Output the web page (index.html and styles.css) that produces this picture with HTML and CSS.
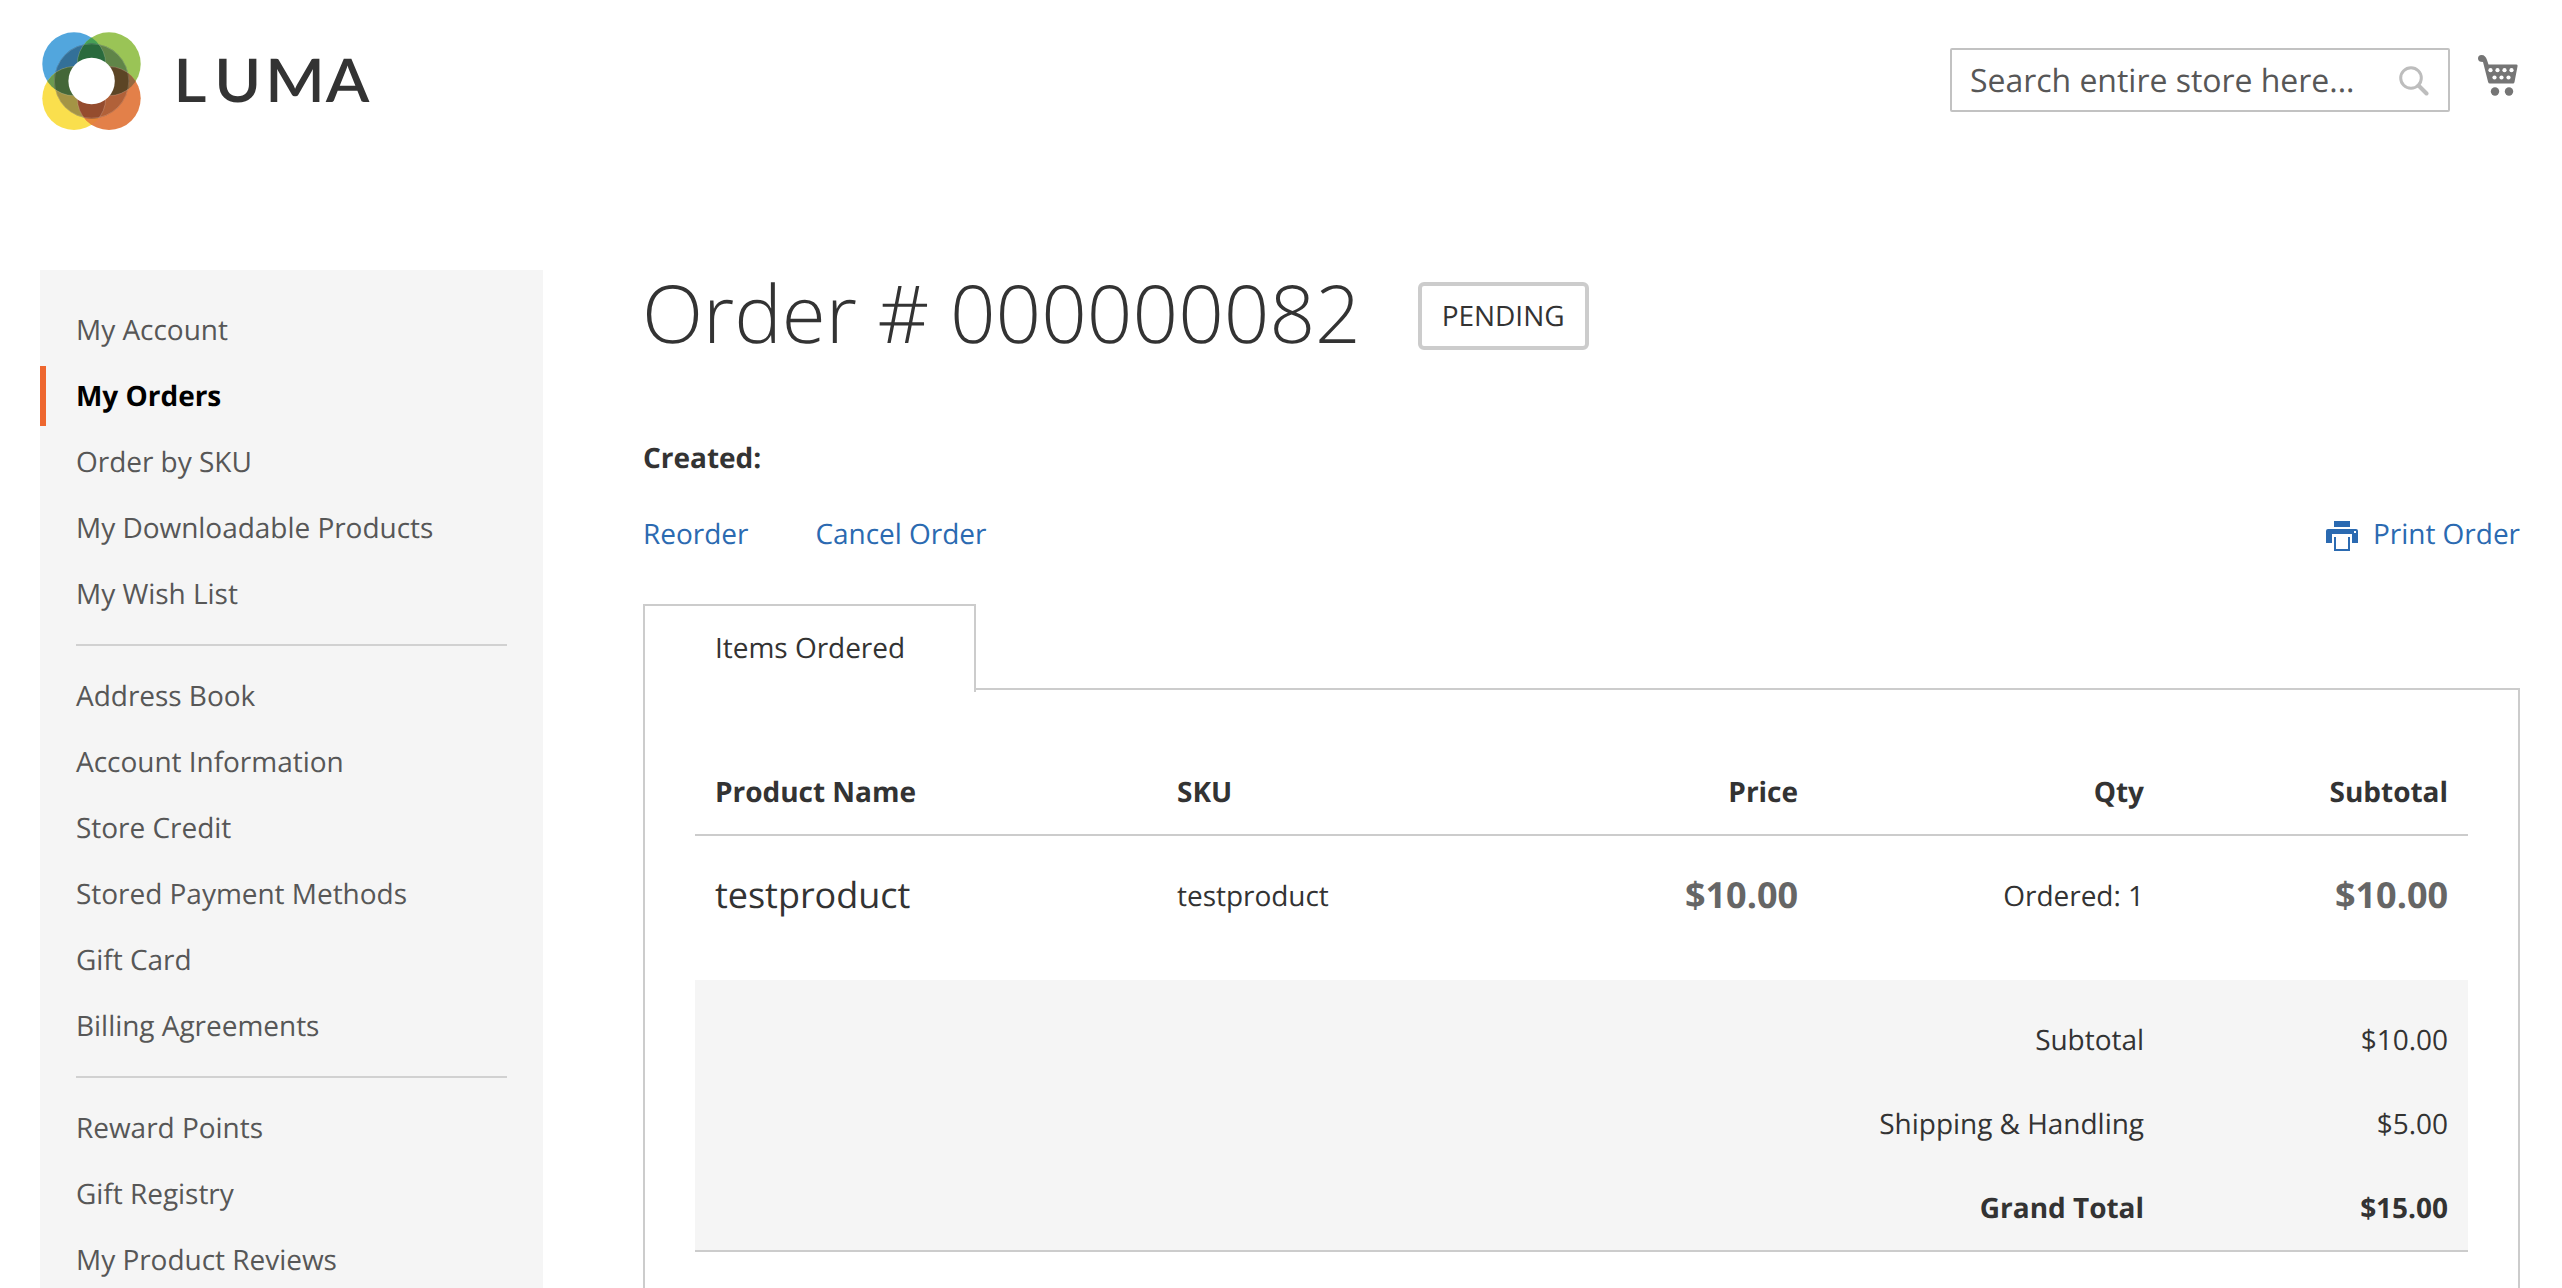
FILE: index.html
```html
<!DOCTYPE html>
<html lang="en">
<head>
<meta charset="utf-8">
<title>Order # 000000082</title>
<link rel="stylesheet" href="styles.css">
</head>
<body>
<header class="header">
  <svg class="logo" width="340" height="100" viewBox="0 0 340 100" role="img" aria-label="LUMA">
    <defs>
      <clipPath id="blue"><circle cx="32" cy="32" r="31.7"/></clipPath>
      <clipPath id="orange"><circle cx="67" cy="66.3" r="31.7"/></clipPath>
      <clipPath id="ring"><circle cx="49.6" cy="49" r="37.5"/></clipPath>
    </defs>
    <circle cx="32" cy="32" r="31.7" fill="#52a6dd"/>
    <circle cx="67" cy="32" r="31.7" fill="#9ac456"/>
    <circle cx="32" cy="66.3" r="31.7" fill="#fadf4d"/>
    <circle cx="67" cy="66.3" r="31.7" fill="#e38049"/>
    <g clip-path="url(#blue)"><circle cx="67" cy="32" r="31.7" fill="#479f56"/><circle cx="32" cy="66.3" r="31.7" fill="#6b9a50"/></g>
    <g clip-path="url(#orange)"><circle cx="67" cy="32" r="31.7" fill="#94683f"/><circle cx="32" cy="66.3" r="31.7" fill="#e5853a"/></g>
    <g clip-path="url(#ring)">
      <circle cx="32" cy="32" r="31.7" fill="#337098"/>
      <circle cx="67" cy="32" r="31.7" fill="#608548"/>
      <circle cx="32" cy="66.3" r="31.7" fill="#a49445"/>
      <circle cx="67" cy="66.3" r="31.7" fill="#b16139"/>
      <g clip-path="url(#blue)"><circle cx="67" cy="32" r="31.7" fill="#2a6a3d"/><circle cx="32" cy="66.3" r="31.7" fill="#446738"/></g>
      <g clip-path="url(#orange)"><circle cx="67" cy="32" r="31.7" fill="#5c4525"/><circle cx="32" cy="66.3" r="31.7" fill="#954c2e"/></g>
    </g>
    <g fill="none" stroke="#fff" stroke-opacity=".3" stroke-width=".6" clip-path="url(#ring)"><circle cx="32" cy="32" r="31.7"/><circle cx="67" cy="32" r="31.7"/><circle cx="32" cy="66.3" r="31.7"/><circle cx="67" cy="66.3" r="31.7"/><circle cx="49.6" cy="49" r="37.2"/></g>
    <circle cx="49.6" cy="49" r="23.2" fill="#fff"/>
    <text class="logo-text" transform="scale(1.06 1)" x="124 162.600 210.500 267.600" y="69.5">LUMA</text>
  </svg>
  <div class="tools">
    <div class="search"><span>Search entire store here...</span>
      <svg width="30" height="30" viewBox="0 0 30 30" fill="none" stroke="#bdbdbd"><circle cx="12" cy="12" r="10.3" stroke-width="3"/><path d="M19.5 19.5L27.5 27.500" stroke-width="4" stroke-linecap="round"/></svg>
    </div>
    <svg class="cart" width="40" height="42" viewBox="0 0 40 42"><path fill="#757575" d="M3.5 0C6.5 0 8 2 9 5L10.500 9.500H38.500Q40 9.500 39.500 11.500L36.500 27Q36.200 28.500 35 28.500H12Q10.500 28.500 10.100 27L5 7Q0 7 0 3.500Q0 0 3.500 0Z"/><g fill="#fff"><circle cx="12.500" cy="15.200" r="2.100"/><circle cx="19.500" cy="15.200" r="2.100"/><circle cx="26.500" cy="15.200" r="2.100"/><circle cx="33.500" cy="15.200" r="2.100"/><circle cx="16.500" cy="22.500" r="2.100"/><circle cx="23.500" cy="22.500" r="2.100"/><circle cx="30.500" cy="22.500" r="2.100"/></g><g fill="#757575"><circle cx="17" cy="36.500" r="4.200"/><circle cx="31" cy="36.500" r="4.200"/></g></svg>
  </div>
</header>
<div class="columns">
  <nav class="sidebar">
    <a>My Account</a>
    <a class="current">My Orders</a>
    <a>Order by SKU</a>
    <a>My Downloadable Products</a>
    <a>My Wish List</a>
    <hr>
    <a>Address Book</a>
    <a>Account Information</a>
    <a>Store Credit</a>
    <a>Stored Payment Methods</a>
    <a>Gift Card</a>
    <a>Billing Agreements</a>
    <hr>
    <a>Reward Points</a>
    <a>Gift Registry</a>
    <a>My Product Reviews</a>
  </nav>
  <main class="main">
    <div class="title-row"><h1>Order # 000000082</h1><span class="status">PENDING</span></div>
    <div class="created">Created:</div>
    <div class="actions">
      <a>Reorder</a><a>Cancel Order</a>
      <a class="print"><svg width="32" height="30" viewBox="0 0 32 30" fill="#2b6ab1"><path d="M8 0H24V6H8Z"/><path fill-rule="evenodd" d="M2 8H30Q32 8 32 10V22H26V13H6V22H0V10Q0 8 2 8ZM28 10V12H30V10Z"/><path d="M8 16H10V28H22V16H24V30H8Z"/></svg>Print Order</a>
    </div>
    <div class="tabs"><div class="tab">Items Ordered</div></div>
    <section class="panel">
      <div class="row head"><span>Product Name</span><span>SKU</span><span class="num">Price</span><span class="num">Qty</span><span class="num">Subtotal</span></div>
      <div class="row item"><span class="name">testproduct</span><span>testproduct</span><span class="num price">$10.00</span><span class="num">Ordered: 1</span><span class="num price">$10.00</span></div>
      <div class="totals">
        <div class="total"><span>Subtotal</span><span>$10.00</span></div>
        <div class="total"><span>Shipping &amp; Handling</span><span>$5.00</span></div>
        <div class="total grand"><span>Grand Total</span><span>$15.00</span></div>
      </div>
    </section>
  </main>
</div>
</body>
</html>
```
FILE: styles.css
```css
* { box-sizing: border-box; }
html, body { height: 100%; overflow: hidden; }
body {
  margin: 0;
  background: #fff;
  color: #333;
  font: 28px/40px "Open Sans", sans-serif;
  letter-spacing: -.03px;
  text-rendering: geometricPrecision;
  display: flex;
  flex-direction: column;
}
.header {
  height: 270px;
  flex: none;
  padding: 32px 44px 0 42px;
  display: flex;
  justify-content: space-between;
  align-items: flex-start;
}
.logo { display: block; }
.logo-text { font: 600 60px Lato, sans-serif; fill: #333; }
.tools { display: flex; gap: 28px; padding-top: 16px; }
.search {
  width: 500px;
  height: 64px;
  border: 2px solid #c2c2c2;
  border-radius: 2px;
  padding: 1px 19px 0 18px;
  display: flex;
  align-items: center;
  justify-content: space-between;
  font-size: 32px;
  color: #575757;
}
.cart { margin-top: 7px; }
.columns { display: flex; padding: 0 42px 0 40px; gap: 100px; flex: 1; min-height: 0; }
.sidebar {
  width: 503px;
  flex: none;
  background: #f5f5f5;
  padding: 30px 0 0;
  display: flex;
  flex-direction: column;
  color: #575757;
  overflow: hidden;
}
.sidebar a { flex: none; height: 60px; margin-bottom: 6px; padding: 10px 30px 10px 36px; }
.sidebar a:last-child { height: 58px; padding-bottom: 8px; margin: 0; }
.sidebar .current { border-left: 6px solid #ee672f; padding-left: 30px; font-weight: 700; color: #000; }
.sidebar hr { flex: none; border: 0; height: 2px; background: #d1d1d1; margin: 14px 36px 20px; }
.main { flex: 1; display: flex; flex-direction: column; }
.title-row { display: flex; align-items: flex-start; gap: 57px; height: 168px; }
h1 { margin: -1px 0 0 -1px; font-weight: 300; font-size: 80px; line-height: 88px; }
.status {
  height: 68px;
  margin-top: 12px;
  border: 4px solid #ccc;
  border-radius: 6px;
  padding: 10px 20px;
}
.created { font-weight: 700; height: 76px; }
.actions { display: flex; height: 90px; gap: 67px; color: #2b6ab1; }
.print { margin-left: auto; display: flex; gap: 15px; align-items: flex-start; }
.print svg { margin-top: 7px; }
.tabs { display: flex; }
.tab {
  position: relative;
  width: 333px;
  height: 88px;
  margin-bottom: -4px;
  padding: 22px 70px;
  border: solid #ccc;
  border-width: 2px 2px 0;
  background: #fff;
  white-space: nowrap;
}
.panel { flex: 1; border: solid #ccc; border-width: 2px 2px 0; padding: 82px 50px 0; }
.row { display: grid; grid-template-columns: 462px 1fr 260px 346px 304px; }
.row > span { padding: 0 20px; }
.head { height: 64px; font-weight: 700; border-bottom: 2px solid #ccc; }
.num { text-align: right; }
.item { height: 144px; padding-top: 40px; }
.item .name { font-size: 36px; line-height: 37px; }
.row .price { font-size: 36px; line-height: 38px; font-weight: 700; color: #666; }
.totals { background: #f5f5f5; border-bottom: 2px solid #ccc; padding-top: 18px; }
.total { display: grid; grid-template-columns: 1fr 304px; text-align: right; }
.total span { padding: 22px 20px; }
.grand { font-weight: 700; }
```
